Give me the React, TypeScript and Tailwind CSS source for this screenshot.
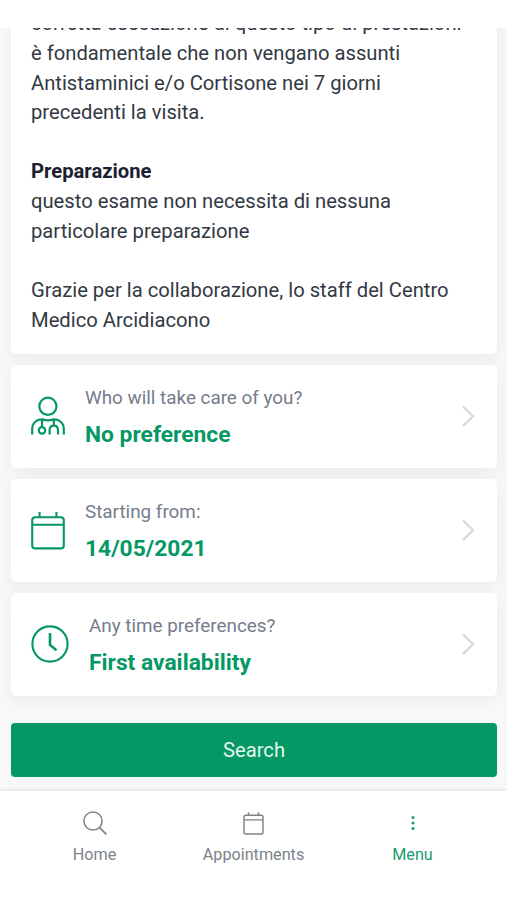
import type { ReactNode } from 'react';

function DoctorIcon() {
  return (
    <svg className="h-10 w-[34px] shrink-0" viewBox="0 0 34 40" fill="none" stroke="currentColor" strokeWidth="2.2">
      <circle cx="16.9" cy="10.3" r="8.6" />
      <path d="M1.2 38.5V33.5C1.2 27 5.4 23.4 11.2 23.4C14.6 24.6 19.2 24.6 22.6 23.4C28.6 23.4 32.8 27 32.8 33.5V38.5" />
      <path d="M11 23.5V31M22.8 23.5V29.5" />
      <circle cx="11" cy="34.4" r="3.2" />
      <path d="M18.6 38.5V34.2C18.6 31.2 20.2 29.7 22.8 29.7S27 31.2 27 34.2V38.5" />
    </svg>
  );
}

function CalendarIcon({ className, strokeWidth = 2.1 }: { className: string; strokeWidth?: number }) {
  return (
    <svg className={className} viewBox="0 0 34 40" fill="none" stroke="currentColor" strokeWidth={strokeWidth}>
      <rect x="1.2" y="7.2" width="31.6" height="31.2" rx="3" />
      <path d="M1.2 14.8H32.8M8.6 7V2M25.4 7V2" />
    </svg>
  );
}

function ClockIcon() {
  return (
    <svg className="size-[38px] shrink-0" viewBox="0 0 38 38" fill="none" stroke="currentColor" strokeWidth="2.1">
      <circle cx="19" cy="19" r="17.6" />
      <path d="M19 8V20L25.5 25.2" strokeWidth="2.6" />
    </svg>
  );
}

function Option({ icon, label, value }: { icon: ReactNode; label: string; value: string }) {
  return (
    <button className="flex h-[103.5px] w-full items-center rounded-[5px] bg-white pr-[22px] pb-px pl-5 text-left shadow-[0_4px_16px_rgba(0,0,0,0.06)]">
      <span className="text-[#059865]">{icon}</span>
      <span className="ml-5 flex flex-1 flex-col pt-[1.4px]">
        <span className="text-[18.85px] leading-7 text-[#757c8b]">{label}</span>
        <span className="mt-[8.5px] text-[22.8px] leading-7 font-bold text-[#059865]">{value}</span>
      </span>
      <svg className="h-[22px] w-[13px]" viewBox="0 0 13 22" fill="none" stroke="#d8d8d8" strokeWidth="2.2">
        <path d="M1 1.5L11 11.3L1 21.1" />
      </svg>
    </button>
  );
}

function Tab({ icon, label, active = false }: { icon: ReactNode; label: string; active?: boolean }) {
  return (
    <button className={`flex w-[159px] flex-col items-center pt-[18px] ${active ? 'text-[#189c70]' : 'text-[#7b838c]'}`}>
      <span className="flex h-7 items-center justify-center">{icon}</span>
      <span className="mt-1.5 text-[16.2px] leading-6">{label}</span>
    </button>
  );
}

export default function App() {
  return (
    <div className="flex h-[900px] w-[507px] flex-col overflow-hidden bg-white font-['Roboto','Liberation_Sans',sans-serif]">
      <div className="h-7 shrink-0" />
      <main className="flex h-[763px] shrink-0 flex-col overflow-hidden bg-[#f8f8f8] pr-[10px] pl-[11px]">
        <section className="-mt-10 shrink-0 rounded-[5px] bg-white px-5 pt-[21.2px] pb-[18.8px] text-[20.22px] leading-[29.65px] text-[#323943] shadow-[0_4px_16px_rgba(0,0,0,0.06)]">
          <p>
            corretta esecuzione di questo tipo di prestazioni
            <br />è fondamentale che non vengano assunti
            <br />
            Antistaminici e/o Cortisone nei 7 giorni
            <br />
            precedenti la visita.
          </p>
          <br />
          <p>
            <b className="text-[#1a2130]">Preparazione</b>
            <br />
            questo esame non necessita di nessuna
            <br />
            particolare preparazione
          </p>
          <br />
          <p>
            Grazie per la collaborazione, lo staff del Centro
            <br />
            Medico Arcidiacono
          </p>
        </section>
        <div className="mt-[10.3px] flex shrink-0 flex-col gap-[10.5px]">
          <Option icon={<DoctorIcon />} label="Who will take care of you?" value="No preference" />
          <Option icon={<CalendarIcon className="h-10 w-[34px]" />} label="Starting from:" value="14/05/2021" />
          <Option icon={<ClockIcon />} label="Any time preferences?" value="First availability" />
        </div>
        <button className="mt-[27px] h-[54px] shrink-0 rounded-[4px] bg-[#059865] text-[20.2px] text-[#e2f7ee]">Search</button>
      </main>
      <nav className="relative flex flex-1 justify-center bg-white shadow-[0_-1px_3px_rgba(0,0,0,0.1)]">
        <Tab
          label="Home"
          icon={
            <svg className="size-6" viewBox="0 0 24 24" fill="none" stroke="currentColor" strokeWidth="1.5">
              <circle cx="10" cy="10" r="9.1" />
              <path d="M16.3 16.3L23.3 23.3" strokeWidth="1.8" />
            </svg>
          }
        />
        <Tab label="Appointments" icon={<CalendarIcon className="h-6 w-[21px]" strokeWidth={2.4} />} />
        <Tab
          label="Menu"
          active
          icon={
            <svg className="h-4 w-1" viewBox="0 0 4 16" fill="currentColor">
              <circle cx="2" cy="2.6" r="1.5" />
              <circle cx="2" cy="8" r="1.5" />
              <circle cx="2" cy="13.4" r="1.5" />
            </svg>
          }
        />
      </nav>
    </div>
  );
}
